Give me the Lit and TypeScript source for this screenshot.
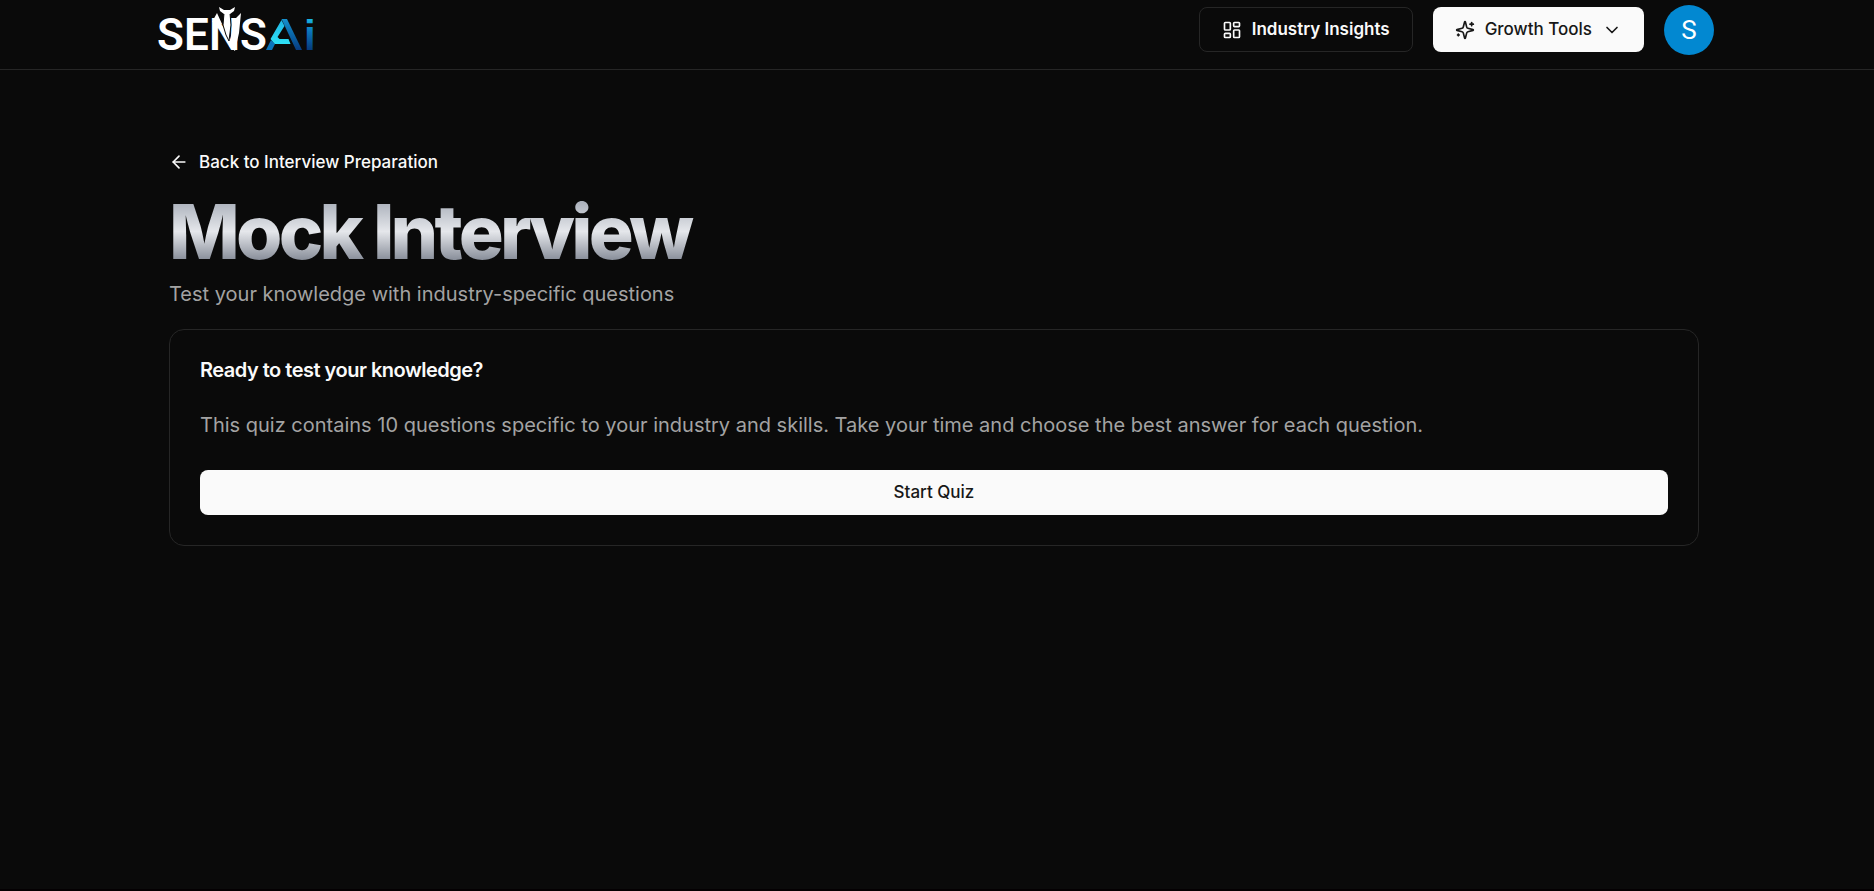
import { LitElement, html, css, svg } from "lit";
import { customElement } from "lit/decorators.js";

const lucide = (body: unknown) => html`<svg class="icon" viewBox="0 0 24 24" fill="none" stroke="currentColor" stroke-width="2" stroke-linecap="round" stroke-linejoin="round" aria-hidden="true">${body}</svg>`;

@customElement("sensai-logo")
export class SensaiLogo extends LitElement {
  static styles = css`
    :host { display: block; }
    svg { display: block; width: 160px; height: 59px; overflow: visible; }
    .word { font-family: Roboto, "Liberation Sans", sans-serif; font-weight: 600; font-size: 44px; fill: #fff; }
    .dot { font-family: "Liberation Sans", sans-serif; font-weight: 700; font-size: 42px; fill: url(#deep); }
  `;
  render() {
    return html`<svg viewBox="0 0 160 59" role="img" aria-label="SENSAi">
      <defs>
        <linearGradient id="deep" gradientUnits="userSpaceOnUse" x1="0" y1="19" x2="0" y2="50"><stop offset="0" stop-color="#18b4e4"/><stop offset="0.4" stop-color="#0a74bb"/><stop offset="1" stop-color="#063a7c"/></linearGradient>
        <linearGradient id="leg" x1="0" y1="0" x2="0" y2="1"><stop offset="0" stop-color="#1690cc"/><stop offset="0.5" stop-color="#0a66a8"/><stop offset="1" stop-color="#083b80"/></linearGradient>
        <linearGradient id="facet" x1="0" y1="0" x2="0" y2="1"><stop offset="0" stop-color="#1fb6e6"/><stop offset="1" stop-color="#2ee0f5"/></linearGradient>
      </defs>
      <text class="word" x="-1" y="50">S</text>
      <text class="word" x="26" y="50">E</text>
      <text class="word" x="51" y="50">N</text>
      <text class="word" x="82" y="50">S</text>
      <path fill="#fff" d="M54 22l5-9 5 11zM76 20l7-7-2 20-4 18-6-5z"/>
      <path fill="#fff" stroke="#0a0a0a" stroke-width="1" d="M66 13h6l1 12-2 16-3-6-3-10z"/>
      <path fill="#fff" d="M61 7l5 3h6l5-3-1 4-4 3h-6l-4-3z"/>
      <path fill="url(#leg)" d="M123.500 19h5.500l15 31h-6z"/>
      <path fill="url(#facet)" d="M123.500 20l3 6-7 11 2 2h9l2 5h-16l-4-5z"/>
      <path fill="#0a74bb" d="M113 40l4 4-3 6h-6z"/>
      <text class="dot" x="146" y="50">i</text>
    </svg>`;
  }
}

@customElement("app-root")
export class AppRoot extends LitElement {
  static styles = css`
    :host { display: block; box-sizing: border-box; min-height: 100vh; border-bottom: 2px solid #040002; background: #0a0a0a; color: #fafafa; font-family: Inter, "Liberation Sans", sans-serif; font-size: 20px; line-height: 30px; }
    * { box-sizing: border-box; }
    h1, h2, p { margin: 0; }
    a { color: inherit; text-decoration: none; }
    button { font: inherit; border: 0; cursor: pointer; }
    .icon { width: 20px; height: 20px; flex: none; }
    header { border-bottom: 1px solid #262626; }
    .bar { display: flex; align-items: center; justify-content: space-between; height: 69px; padding: 0 160px 10px 158px; }
    nav { display: flex; align-items: center; gap: 20px; }
    .btn { display: flex; align-items: center; justify-content: center; gap: 10px; height: 45px; padding: 0 22px; border-radius: 8px; font-size: 17px; line-height: 25px; font-weight: 500; }
    .outline { border: 1px solid #262626; font-weight: 600; }
    .solid { background: #fafafa; color: #171717; }
    .avatar { width: 50px; height: 50px; padding: 0; border-radius: 50%; background: #0288d1; color: #fff; font-family: Roboto, sans-serif; font-size: 26px; }
    main { padding: 69px 175px 0 169px; }
    .intro { display: flex; flex-direction: column; align-items: flex-start; gap: 10px; }
    .back { display: flex; align-items: center; gap: 10px; height: 45px; font-size: 17px; font-weight: 500; }
    h1 { font-size: 75px; line-height: 75px; font-weight: 800; letter-spacing: -0.05em; padding-right: 8px; background: linear-gradient(#9ca3af, #e5e7eb, #6b7280); color: transparent; -webkit-background-clip: text; background-clip: text; }
    .muted { color: #a3a3a3; }
    .card { display: flex; flex-direction: column; gap: 30px; margin-top: 20px; padding: 30px; border: 1px solid #262626; border-radius: 15px; }
    h2 { font-size: 20px; line-height: 20px; font-weight: 600; letter-spacing: -0.025em; }
  `;
  render() {
    return html`
      <header><div class="bar">
        <a href="#" aria-label="SENSAi home"><sensai-logo></sensai-logo></a>
        <nav>
          <a class="btn outline" href="#insights">${lucide(svg`<rect width="7" height="9" x="3" y="3" rx="1"/><rect width="7" height="5" x="14" y="3" rx="1"/><rect width="7" height="9" x="14" y="12" rx="1"/><rect width="7" height="5" x="3" y="16" rx="1"/>`)}Industry Insights</a>
          <button class="btn solid" type="button">${lucide(svg`<path d="M9.937 15.5A2 2 0 0 0 8.5 14.063l-6.135-1.582a.5.5 0 0 1 0-.962L8.5 9.936A2 2 0 0 0 9.937 8.5l1.582-6.135a.5.5 0 0 1 .963 0L14.063 8.5A2 2 0 0 0 15.5 9.937l6.135 1.581a.5.5 0 0 1 0 .964L15.5 14.063a2 2 0 0 0-1.437 1.437l-1.582 6.135a.5.5 0 0 1-.963 0z"/><path d="M20 3v4"/><path d="M22 5h-4"/><path d="M4 17v2"/><path d="M5 18H3"/>`)}Growth Tools${lucide(svg`<path d="m6 9 6 6 6-6"/>`)}</button>
          <button class="avatar" type="button" aria-label="Account">S</button>
        </nav>
      </div></header>
      <main>
        <div class="intro">
          <a class="back" href="#interview">${lucide(svg`<path d="m12 19-7-7 7-7"/><path d="M19 12H5"/>`)}Back to Interview Preparation</a>
          <h1>Mock Interview</h1>
          <p class="muted">Test your knowledge with industry-specific questions</p>
        </div>
        <section class="card">
          <h2>Ready to test your knowledge?</h2>
          <p class="muted">This quiz contains 10 questions specific to your industry and skills. Take your time and choose the best answer for each question.</p>
          <button class="btn solid" type="button">Start Quiz</button>
        </section>
      </main>`;
  }
}
